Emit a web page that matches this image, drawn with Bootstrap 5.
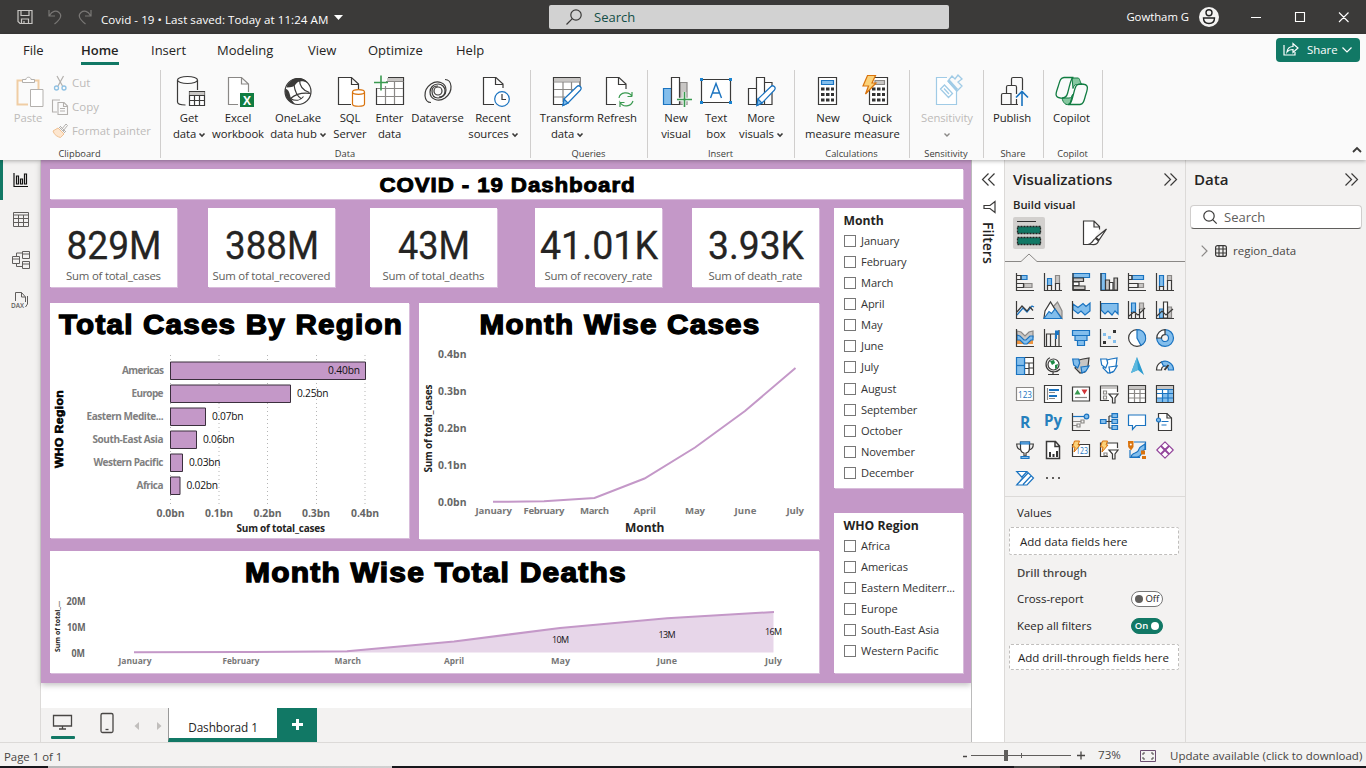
<!DOCTYPE html>
<html lang="en">
<head>
<meta charset="utf-8">
<meta name="viewport" content="width=device-width, initial-scale=1">
<title>Covid - 19</title>
<link href="https://cdn.jsdelivr.net/npm/bootstrap@5.3.0/dist/css/bootstrap.min.css" rel="stylesheet">
<style>
:root{--teal:#117865;--lilac:#c498c8;--pane:#f3f2f1;--ink:#252423}
html,body{height:100%}
body{font-family:"Open Sans","Noto Sans",sans-serif;font-size:11.3px;line-height:16px;color:var(--ink);background:#fff;overflow:hidden}
svg{display:block;flex:none;overflow:visible}
.app{width:1366px;height:768px}
/* title bar */
.titlebar{height:34px;background:#3b3a39;color:#fff}
.titlebar .doc{margin-left:9px;font-size:11.6px;letter-spacing:.04px;padding-top:6px;white-space:nowrap}
.topsearch{left:549px;top:5px;width:400px;height:24px;background:#d2d2d2;border-radius:2px;color:#134f47;font-size:13px}
/* ribbon */
.ribbon{height:126px;background:#fafafa;box-shadow:0 1px 4px rgba(0,0,0,.3);z-index:3}
.tabs{height:35px;font-size:13px;padding-left:23px}
.tabs span{line-height:20px;padding-top:6px;height:31px;white-space:nowrap}
.tabs .on{font-weight:600;border-bottom:3px solid var(--teal)}
.sharebtn{width:84px;height:24px;background:var(--teal);color:#fff;border-radius:4px;margin:4px 6px 0 auto;font-size:11.4px}
.rgroup{height:91px;position:relative}
.rgroup::after{content:"";position:absolute;right:0;top:1px;width:1px;height:88px;background:#d0cecd}
.rgroup .items{height:75px;padding-top:5px}
.rgroup .cap{font-size:9.3px;line-height:14px;text-align:center;margin-top:3px;color:#3b3a39;padding-right:2px}
.rb{text-align:center;white-space:nowrap}
.rb>div{margin:0 -20px;letter-spacing:-.08px}
.rb>svg{margin:0 auto 2px}
.dim{color:#bdbbb9}
.chev{display:inline-block;vertical-align:1px;margin-left:3px}
/* body */
.rail{width:41px;background:var(--pane);border-right:1px solid #dcdad8}
.rail .cell{height:40px}
.rail .cell.on{border-left:3px solid var(--teal)}
.report{width:930px;background:#fff}
.page{height:523px;background:var(--lilac);padding:9px 8px 9px 9px;box-shadow:0 2px 6px rgba(0,0,0,.25)}
.tile{background:#fff;box-shadow:1px 1px 0 rgba(255,255,255,.35)}
.kpis{display:grid;grid-template-columns:158px 162px 165px 157px 127px;height:79px}
.kpis .tile{width:127px}
.slicer{padding:3px 0 0 9.5px;overflow:hidden}
.slicer b{display:block;line-height:19px;font-size:12.2px;font-weight:700}
.slicer .opt{height:21.15px;font-size:11.1px;letter-spacing:-.1px;white-space:nowrap;color:#333}
.slicer i{width:12px;height:12px;border:1px solid #777;margin-right:5.5px;flex:none}
.pagetabs{height:34px;background:var(--pane);margin-top:25px}
.ptab{width:109px;background:#fff;border-left:1px solid #999;border-bottom:4px solid var(--teal);font-size:11.8px;letter-spacing:-.1px;padding-top:9px;font-weight:500;text-align:center;line-height:20px}
.filters{width:34px;background:#fff;border-left:1px solid #bbb;border-right:1px solid #dcdad8}
.filters .v{writing-mode:vertical-rl;font-size:14px;font-weight:600;line-height:18px}
.pane{background:var(--pane)}
.pane h2{font-size:15.1px;font-weight:600;line-height:20px;margin:0;letter-spacing:-.05px}
.viz{width:181px;border-right:1px solid #dcdad8}
.vgrid{display:grid;grid-template-columns:repeat(6,28px);grid-auto-rows:28px;padding:5px 0 0 6px;height:234px;border-bottom:1px solid #dcdad8}
.vgrid svg{margin:5px}
.well{width:170px;height:28px;margin-left:4px;background:#fff;border:1px dashed #c0bebc;border-radius:2px;font-size:11.5px;line-height:27px;white-space:nowrap}
.lab{font-size:11.4px;letter-spacing:-.02px}
.tog{width:32px;height:16px;border-radius:8px;font-size:9.5px;line-height:14px;border:1px solid #777;background:#fff}
.tog.on{background:var(--teal);border-color:var(--teal);color:#fff;font-weight:600}
.tog em{width:8px;height:8px;border-radius:50%;background:#605e5c}
.tog.on em{background:#fff}
.dsearch{height:24px;margin:16px 4px 0 4px;background:#fff;border:1px solid #d0cecd;border-bottom:1px solid #605e5c;border-radius:4px;font-size:13px;color:#605e5c}
.status{height:24px;background:var(--pane);border-top:1px solid #dcdad8;color:#484644;font-size:11.8px}
.strip{height:2px;background:linear-gradient(90deg,#17171c 48px,#b8b8b8 48px,#d0d0d0 392px,#17171c 392px,#17171c 1014px,#444 1014px,#444 1060px,#17171c 1060px)}
/* icon strokes and fills */
.n,.b,.g,.o,.gr,.w{fill:none;stroke-width:1.2}
.n{stroke:#3b3a39}.b{stroke:#1a73c0}.g{stroke:#3a9a50}.o{stroke:#d9730d}.gr{stroke:#8a8886}.w{stroke:#fff}
.fb{fill:#83beec}.fg{fill:#c8c6c4}.fw{fill:#fff}
.ab{font-family:"Liberation Sans",sans-serif;font-weight:700;fill:#000;stroke:#000;stroke-width:1.3;letter-spacing:1.1px}
.kp{font-family:Roboto,sans-serif;fill:#252423;stroke:#252423;stroke-width:.3;font-size:39px}
.ks{font-size:11.4px;fill:#605e5c}
.ax{font-weight:700;font-size:10.4px;fill:#666}
.cat{font-weight:700;font-size:10px;fill:#808080}
.mo{font-weight:700;font-size:9.6px;fill:#777}
.dl{font-size:10.2px;fill:#111}
.st{font-weight:700;font-size:10px;fill:#252423}
</style>
</head>
<body>
<div class="app d-flex flex-column">

<!-- title bar -->
<header class="titlebar d-flex align-items-center position-relative">
 <svg width="16" height="16" viewBox="0 0 16 16" style="margin-left:17px"><path d="M1 1.500h14v13H3l-2-2zM4 1.500v5h8v-5M4.500 14.500v-4.500h7v4.500M7 12v2" fill="none" stroke="#c8c6c4" stroke-width="1.200"/></svg>
 <svg width="14" height="16" viewBox="0 0 14 16" style="margin-left:15px"><path d="M1 1v6h6M1.500 6.500C4 2 8 1 11 3.500s2.500 6-4.500 11.500" fill="none" stroke="#797775" stroke-width="1.200"/></svg>
 <svg width="14" height="16" viewBox="0 0 14 16" class="ms-3"><path d="M13 1v6H7M12.500 6.500C10 2 6 1 3 3.500s-2.500 6 4.500 11.500" fill="none" stroke="#797775" stroke-width="1.200"/></svg>
 <span class="doc">Covid - 19 • Last saved: Today at 11:24 AM</span>
 <svg width="8" height="5" viewBox="0 0 8 5" style="margin-left:6px"><path d="M0 0h9L4.500 5z" fill="#fff"/></svg>
 <div class="topsearch position-absolute d-flex align-items-center">
  <svg width="16" height="16" viewBox="0 0 16 16" style="margin:0 12px 0 17px"><circle cx="10" cy="6" r="5.200" class="n"/><path d="M6.300 9.700L.5 15.500" class="n" stroke-width="1.500"/></svg>Search
 </div>
 <span class="ms-auto" style="margin-right:10px">Gowtham G</span>
 <svg width="20" height="20" viewBox="0 0 20 20"><circle cx="10" cy="10" r="10" fill="#f3f2f1"/><circle cx="10" cy="5.700" r="3" fill="none" stroke="#222" stroke-width="1.400"/><path d="M4.500 11h11c0 4-2 5.500-5.500 5.500S4.500 15 4.500 11z" fill="none" stroke="#222" stroke-width="1.400"/></svg>
 <svg width="130" height="14" viewBox="0 0 130 14" style="margin-right:17px"><path d="M32 7.500h10M76.500 2.500h9v9h-9zM120 2.500l9.500 9.500M129.500 2.500L120 12" fill="none" stroke="#fff" stroke-width="1.100"/></svg>
</header>

<!-- ribbon -->
<div class="ribbon position-relative">
 <nav class="tabs d-flex">
  <span style="width:58px">File</span><span class="on" style="width:38px;margin-right:32px">Home</span><span style="width:66px">Insert</span><span style="width:91px">Modeling</span><span style="width:60px">View</span><span style="width:88px">Optimize</span><span>Help</span>
  <div class="sharebtn d-flex align-items-center">
   <svg width="16" height="15" viewBox="0 0 16 15" style="margin:-3px 8px 0 7px"><path d="M1 4v10h11v-3M4 11c.5-4 3-5.500 6-5.500V2.500l5 4.500-5 4.500V8.500C7 8.500 5.500 9 4 11z" class="w"/></svg>Share
   <svg width="10" height="6" viewBox="0 0 10 6" class="ms-1"><path d="M.5.5L5 5 9.500.5" class="w"/></svg>
  </div>
 </nav>
 <div class="d-flex">
  <!-- clipboard -->
  <div class="rgroup dim" style="width:161px">
   <div class="items d-flex">
    <div class="rb" style="width:28px;margin-left:14px">
     <svg width="28" height="34" viewBox="0 0 28 34"><path d="M14 30.500H3.500v-24H9m10 0h5.500V15" fill="none" stroke="#f0cda4" stroke-width="2"/><path d="M8.500 8.500v-3h3.500c0-3 5-3 5 0h3.500v3zM16.500 15.500h12.500v17H16.500z" fill="#fff" stroke="#b3b0ad"/></svg>
     <div>Paste</div></div>
    <div style="margin-left:9px;margin-top:-3px">
     <div class="d-flex align-items-center" style="height:24px"><svg width="18" height="16" viewBox="0 0 18 16"><path d="M6 1l5.500 10M12.500 1L7 11" fill="none" stroke="#b3b0ad" stroke-width="1.200"/><circle cx="5.500" cy="13" r="2" fill="none" stroke="#8fc1e3" stroke-width="1.300"/><circle cx="13" cy="13" r="2" fill="none" stroke="#8fc1e3" stroke-width="1.300"/></svg><span style="margin-left:3px;font-size:11.500px">Cut</span></div>
     <div class="d-flex align-items-center" style="height:24px"><svg width="18" height="16" viewBox="0 0 18 16"><path d="M6 13H1.500V1H9M7 3.500h6l3.500 3.500v8.500H7zM12.500 3.500V7.500h4M9 9.500h5M9 12h5" fill="none" stroke="#b3b0ad" stroke-width="1.100"/></svg><span style="margin-left:3px;font-size:11.500px">Copy</span></div>
     <div class="d-flex align-items-center" style="height:24px"><svg width="18" height="16" viewBox="0 0 18 16"><path d="M2 8l5-3 6 6-3.500 3.500C7 14 3 12 2 8z" fill="#fde6cf" stroke="#f0c193"/><path d="M8 4l6 6M10.500 6.500L15 1l1.500 1.500L12 8M9 3l6 6" fill="none" stroke="#b3b0ad"/></svg><span style="margin-left:3px;font-size:11.300px">Format painter</span></div>
    </div>
   </div>
   <div class="cap">Clipboard</div>
  </div>
  <!-- data -->
  <div class="rgroup" style="width:370px">
   <div class="items d-flex" style="padding-left:4px">
    <div class="rb" style="width:48px"><svg width="32" height="34" viewBox="0 0 32 34"><path d="M4.500 6v22c0 2 4 3 8 3M24.500 6v10" class="n"/><ellipse cx="14.500" cy="6" rx="10" ry="3.500" class="n fw"/><path d="M16.500 17.500h15v14h-15z" class="n fw"/><path d="M16.500 18h15v3h-15z" class="fg"/><path d="M16.500 21.500h15M16.500 26.500h15M21.500 21v10.500M26.500 21v10.500" class="n" /></svg><div>Get<br>data<svg class="chev" width="6" height="4" viewBox="0 0 6 4"><path d="M.5.5L3 3 5.500.5" class="n" style="stroke-width:1.600"/></svg></div></div>
    <div class="rb" style="width:50px"><svg width="32" height="34" viewBox="0 0 32 34"><path d="M16 30.500H6.500v-27h13L26.500 10v8M19.500 3.500V10h7" class="gr fw"/><rect x="18" y="19" width="14" height="14" fill="#107c41"/><text x="25" y="30.500" text-anchor="middle" font-size="12" font-weight="700" fill="#fff">X</text></svg><div>Excel<br>workbook</div></div>
    <div class="rb" style="width:70px"><svg width="32" height="34" viewBox="0 0 32 34"><circle cx="16" cy="17.500" r="13" class="n fw"/><path d="M10 6c5-3.500 13-2 15.500 3-5-3-10-2-12 1.500-1 2-4 3-9 3C5 11 7 8 10 6zM3.200 14.500c3 1 4 3 4.800 6.500s2 6 5 9c-6-1-11-8-9.800-15.500z" fill="#3b3a39"/><path d="M12 11c1 7 3 11 7 13.500M17.500 5.500c0 6 3 11 10 13M8.500 24.500c6-5 13-6 20-5M8.500 24.500c5 3 10 2 13-2" class="n"/></svg><div>OneLake<br>data hub<svg class="chev" width="6" height="4" viewBox="0 0 6 4"><path d="M.5.5L3 3 5.500.5" class="n" style="stroke-width:1.600"/></svg></div></div>
    <div class="rb" style="width:34px"><svg width="32" height="34" viewBox="0 0 32 34"><path d="M17 30.500H4.500v-27h13L24.500 10v5M17.500 3.500V10.500h7" class="n fw"/><path d="M18.500 18v12c0 3 12 3 12 0V18" class="o fw"/><ellipse cx="24.500" cy="18" rx="6" ry="2.300" class="o fw"/></svg><div>SQL<br>Server</div></div>
    <div class="rb" style="width:45px"><svg width="32" height="34" viewBox="0 0 32 34"><path d="M2.500 14v16.500h27v-27H14" class="n fw"/><path d="M13 4h16v3H13z" class="fg"/><path d="M12 7.500h17.500M3 14.500h26M3 22.500h26M11.500 12v18M20.500 8v22" class="gr"/><path d="M0 8.500h14M7 1.500v15" class="g" style="stroke-width:1.600"/></svg><div>Enter<br>data</div></div>
    <div class="rb" style="width:51px"><svg width="32" height="34" viewBox="0 0 32 34"><g class="n"><path d="M23 5.500c7 0 9 12 0 18.500-6 4-15 2-15-6 0-4 3-8 8-8 4 0 7 3 7 7s-3 6-6 6"/><path d="M9 28.500c-7 0-9-12 0-18.500 6-4 15-2 15 6 0 5-4 8-8 8s-6-3-6-7 3-5 6-5"/><circle cx="16" cy="17" r="4"/></g></svg><div>Dataverse</div></div>
    <div class="rb" style="width:60px"><svg width="32" height="34" viewBox="0 0 32 34"><path d="M17 30.500H6.500v-27h12.500L26 10v4M18.500 3.500V10.500H26" class="n fw"/><circle cx="25" cy="25" r="7.300" class="b fw"/><path d="M25 20v5.500h4" class="n"/></svg><div>Recent<br>sources<svg class="chev" width="6" height="4" viewBox="0 0 6 4"><path d="M.5.5L3 3 5.500.5" class="n" style="stroke-width:1.600"/></svg></div></div>
   </div>
   <div class="cap">Data</div>
  </div>
  <!-- queries -->
  <div class="rgroup" style="width:117px">
   <div class="items d-flex" style="padding-left:7px">
    <div class="rb" style="width:58px"><svg width="32" height="34" viewBox="0 0 32 34"><path d="M29 15v-11.500H2.500v27H12" class="n fw"/><path d="M3 4h26v3.500H3z" class="fg"/><path d="M2.500 8h26.500M3 15.500h19M3 23h11M12 8v20M20.500 8v9" class="gr"/><path d="M13 25l13-12.500c2-2 5.500 1 3.500 3.500L17 29l-5 2.500z" class="b fw"/><path d="M13 25l4 4-5 2.500z" class="b fb"/></svg><div>Transform<br>data<svg class="chev" width="6" height="4" viewBox="0 0 6 4"><path d="M.5.5L3 3 5.500.5" class="n" style="stroke-width:1.600"/></svg></div></div>
    <div class="rb" style="width:42px"><svg width="32" height="34" viewBox="0 0 32 34"><path d="M15 30.500H5.500v-27h12.500L25 10v5M17.500 3.500V10.500H25" class="n fw"/><path d="M18 24c1-6 10-7 13-1.500V18M31 22.500h-4.500M32 27c-2 6-10 6.500-13 1.500V33M19 28.500h4.500" class="g"/></svg><div>Refresh</div></div>
   </div>
   <div class="cap">Queries</div>
  </div>
  <!-- insert -->
  <div class="rgroup" style="width:147px">
   <div class="items d-flex" style="padding-left:8px">
    <div class="rb" style="width:40px"><svg width="32" height="34" viewBox="0 0 32 34"><path d="M3.500 14.500h8v16h-8z" class="b fb"/><path d="M20 8.500h7v22H20z" class="gr fg"/><path d="M11.500 3.500h8v27h-8z" class="n fw"/><path d="M16 25.500h16M24.500 18v15" stroke="#fafafa" stroke-width="3.500"/><path d="M17 25.500h15M24.500 18v15" class="g" style="stroke-width:1.600"/></svg><div>New<br>visual</div></div>
    <div class="rb" style="width:40px"><svg width="32" height="34" viewBox="0 0 32 34"><path d="M1.500 5.500h29v23h-29z" class="n fw"/><path d="M0 4h3v3H0zM29 4h3v3h-3zM0 27h3v3H0zM29 27h3v3h-3z" fill="#1a83d0"/><path d="M10.500 24L16 9.500 21.500 24M12.500 19h7" class="b" style="stroke-width:1.400"/></svg><div>Text<br>box</div></div>
    <div class="rb" style="width:50px"><svg width="32" height="34" viewBox="0 0 32 34"><path d="M3.500 14.500h8v16h-8zM11.500 3.500h8v27h-8zM19.500 8.500h7.500v22h-7.500z" class="n fw"/><path d="M13 25l13-12.500c2-2 5.500 1 3.500 3.500L17 29l-5 2.500z" class="b fw"/><path d="M13 25l4 4-5 2.500z" class="b fb"/></svg><div>More<br>visuals<svg class="chev" width="6" height="4" viewBox="0 0 6 4"><path d="M.5.5L3 3 5.500.5" class="n" style="stroke-width:1.600"/></svg></div></div>
   </div>
   <div class="cap">Insert</div>
  </div>
  <!-- calculations -->
  <div class="rgroup" style="width:115px">
   <div class="items d-flex" style="padding-left:9px">
    <div class="rb" style="width:48px"><svg width="32" height="34" viewBox="0 0 32 34"><path d="M6.500 3.500h18v27h-18z" class="n fw"/><path d="M9.500 6.500h12v4h-12z" class="b fb"/><path d="M9 15h13M9 20.500h13M9 26h13" stroke="#333" stroke-width="3" stroke-dasharray="3.500 1.500" fill="none"/></svg><div>New<br>measure</div></div>
    <div class="rb" style="width:50px"><svg width="32" height="34" viewBox="0 0 32 34"><path d="M8.500 3.500h18v27h-18z" class="n fw"/><path d="M14 6.500h9.500v4H14z" class="gr fg"/><path d="M11 15h13M11 20.500h13M11 26h13" stroke="#333" stroke-width="3" stroke-dasharray="3.500 1.500" fill="none"/><path d="M6.500 1.500h8L11 9h4L4.500 20l3-8H2z" fill="#fbd27a" stroke="#d9730d" stroke-width="1.200"/></svg><div>Quick<br>measure</div></div>
   </div>
   <div class="cap">Calculations</div>
  </div>
  <div class="rgroup" style="width:74px">
   <div class="items d-flex justify-content-center">
    <div class="rb dim" style="width:60px"><svg width="32" height="34" viewBox="0 0 32 34"><path d="M16 3.500H5.500v27h20V17" fill="#fff" stroke="#a0cbe6" stroke-width="1.200"/><g fill="none" stroke="#a0cbe6" stroke-width="1.300"><path d="M9.500 15l4-4 8 8.500-4 4zM13 14.500l5 5.500M17 7l9 10 5-5-4-4 4-3-4-4-3 4-3-3z"/><path d="M17.500 6.500l8.500 9.500" stroke-width="3"/></g></svg><div>Sensitivity<br><svg class="chev m-0" width="6" height="4" viewBox="0 0 6 4"><path d="M.5.5L3 3 5.500.5" class="gr" style="stroke-width:1.400"/></svg></div></div>
   </div>
   <div class="cap">Sensitivity</div>
  </div>
  <div class="rgroup" style="width:60px">
   <div class="items d-flex justify-content-center pe-1">
    <div class="rb" style="width:52px"><svg width="32" height="34" viewBox="0 0 32 34"><path d="M22 30.500H5.500V21q0-1.500 1.500-1.500h8V31M10.500 19v-6q0-1.500 1.500-1.500h7q1.500 0 1.500 1.500v7M15.500 11V5q0-1.500 1.500-1.500h8q1.500 0 1.500 1.500v11M20.500 25v5" class="n"/><path d="M26 32V18M20 23.500l6-6 6 6" class="b" style="stroke-width:1.600"/></svg><div>Publish</div></div>
   </div>
   <div class="cap">Share</div>
  </div>
  <div class="rgroup" style="width:59px">
   <div class="items d-flex justify-content-center pe-1">
    <div class="rb" style="width:52px"><svg width="34" height="34" viewBox="0 0 34 34"><path d="M17 4h6c2 0 2 5 4 6.500h-5.500c-2 0-3 2-3.500 4zM7 24h7c2 0 3-1 3.500-3.500L15 30c-4 2-7-1-8-6z" fill="#86c7a0" stroke="#107c41"/><path d="M9 3.500h9.500c-3 0-4 10-6 16-1 4-3 5-7 4.500C-1 23 1 19 3 13S5 4 9 3.500zM25 30.500H13c4 0 5-10 7-16 1-3 2-4.500 6-4.500 8 0 7 4 5 10s-2 10-6 10.500z" fill="none" stroke="#107c41" stroke-width="1.300"/></svg><div>Copilot</div></div>
   </div>
   <div class="cap">Copilot</div>
  </div>
  <svg width="10" height="6" viewBox="0 0 10 6" class="ms-auto align-self-end" style="margin:0 4px 7px 0"><path d="M1 5l4-4 4 4" class="n" style="stroke-width:1.800"/></svg>
 </div>
</div>

<!-- workspace -->
<main class="d-flex" style="height:582px">
 <aside class="rail">
  <div class="cell on"><svg width="15" height="15" viewBox="0 0 15 15" style="margin:13px 0 0 10px;display:inline-block"><path d="M1 0v13.500h14M3.500 11V3h2v8zM7.500 11V6h2v5zM11.500 11V1h2v10z" fill="none" stroke="#111" stroke-width="1.200"/></svg></div>
  <div class="cell"><svg width="16" height="16" viewBox="0 0 16 16" style="margin:12px 0 0 13px;display:inline-block"><path d="M.5.5h15v14H.5zM.5 3h15M.5 6.500h15M.5 10.500h15M5.500 3v11.500M10.500 3v11.500" fill="none" stroke="#605e5c"/></svg></div>
  <div class="cell"><svg width="18" height="18" viewBox="0 0 18 18" style="margin:11px 0 0 12px;display:inline-block"><path d="M.5 5.500h7v7h-7zM.5 8h7M10.500.5h7v7h-7zM10.500 3h7M10.500 10.500h7v7h-7zM10.500 13h7M4.500 5.500V2h6M4.500 12.500v3h6" fill="none" stroke="#605e5c"/></svg></div>
  <div class="cell"><svg width="18" height="18" viewBox="0 0 18 18" style="margin:11px 0 0 11px;display:inline-block"><path d="M4.500 10V1.500h6L14.500 6v5M10.500 1.500V6h4M16.500 5v8l-2 3" fill="none" stroke="#605e5c"/><text x="0" y="16.500" font-size="7.500" font-weight="600" fill="#605e5c" textLength="13" lengthAdjust="spacingAndGlyphs">DAX</text></svg></div>
 </aside>

 <section class="report d-flex flex-column">
  <div class="page d-flex flex-column">
   <div class="tile" style="height:30px;margin-bottom:9px"><svg width="913" height="30" viewBox="50 169 913 30"><text x="379.500" y="191.500" class="ab" font-size="20" style="stroke-width:.9;letter-spacing:.8px" textLength="256" lengthAdjust="spacingAndGlyphs">COVID - 19 Dashboard</text></svg></div>
   <div class="d-flex justify-content-between flex-fill">
    <div style="width:769px">
     <div class="kpis">
      <div class="tile"><svg width="127" height="79" viewBox="50 208 127 79"><text class="kp" x="66.500" y="259" textLength="95" lengthAdjust="spacingAndGlyphs">829M</text><text class="ks" x="66" y="280" textLength="95">Sum of total_cases</text></svg></div>
      <div class="tile"><svg width="127" height="79" viewBox="208 208 127 79"><text class="kp" x="225" y="259" textLength="94" lengthAdjust="spacingAndGlyphs">388M</text><text class="ks" x="212.500" y="280" textLength="118">Sum of total_recovered</text></svg></div>
      <div class="tile"><svg width="127" height="79" viewBox="370 208 127 79"><text class="kp" x="398" y="259" textLength="72" lengthAdjust="spacingAndGlyphs">43M</text><text class="ks" x="382.500" y="280" textLength="102">Sum of total_deaths</text></svg></div>
      <div class="tile"><svg width="127" height="79" viewBox="535 208 127 79"><text class="kp" x="540" y="259" textLength="118" lengthAdjust="spacingAndGlyphs">41.01K</text><text class="ks" x="544.500" y="280" textLength="108">Sum of recovery_rate</text></svg></div>
      <div class="tile"><svg width="127" height="79" viewBox="692 208 127 79"><text class="kp" x="708" y="259" textLength="96" lengthAdjust="spacingAndGlyphs">3.93K</text><text class="ks" x="708.500" y="280" textLength="94">Sum of death_rate</text></svg></div>
     </div>
     <div class="d-flex justify-content-between" style="margin-top:16px;height:236px">
      <div class="tile" style="width:359px;height:235px">
       <svg width="359" height="235" viewBox="50 303 359 235">
        <text class="ab" x="59" y="333.500" font-size="27" textLength="344" lengthAdjust="spacingAndGlyphs">Total Cases By Region</text>
        <path d="M170.500 355v150M219 355v150M267.500 355v150M316.500 355v150M365 355v150" stroke="#b5b5b5" stroke-dasharray="1 3" fill="none"/>
        <g fill="#c498c8" stroke="#3b2f3d"><path d="M170.500 362h195v17.500h-195zM170.500 385h120v17.500h-120zM170.500 408h35v17.500h-35zM170.500 431h26v17.500h-26zM170.500 454h12v17.500h-12zM170.500 477h9.500v17.500h-9.500z"/></g>
        <g class="cat"><text x="122" y="374" textLength="42">Americas</text><text x="131.500" y="397" textLength="32">Europe</text><text x="86.500" y="420" textLength="77">Eastern Medite...</text><text x="92.500" y="443" textLength="71">South-East Asia</text><text x="93.500" y="466" textLength="70">Western Pacific</text><text x="136.500" y="489" textLength="27">Africa</text></g>
        <g class="dl"><text x="328" y="374" textLength="32">0.40bn</text><text x="297" y="397" textLength="31.500">0.25bn</text><text x="212" y="420" textLength="31.500">0.07bn</text><text x="203" y="443" textLength="31.500">0.06bn</text><text x="189" y="466" textLength="31.500">0.03bn</text><text x="186.500" y="489" textLength="31.500">0.02bn</text></g>
        <g class="ax"><text x="156.500" y="517" textLength="28">0.0bn</text><text x="205" y="517" textLength="28">0.1bn</text><text x="253.500" y="517" textLength="28">0.2bn</text><text x="302" y="517" textLength="28">0.3bn</text><text x="351" y="517" textLength="28">0.4bn</text></g>
        <text class="st" x="236.500" y="532" textLength="88.500">Sum of total_cases</text>
        <text class="ab" transform="translate(62.500 468) rotate(-90)" font-size="11" style="stroke-width:.6;letter-spacing:.3px" textLength="78" lengthAdjust="spacingAndGlyphs">WHO Region</text>
       </svg>
      </div>
      <div class="tile" style="width:400px">
       <svg width="400" height="236" viewBox="419 303 400 236">
        <text class="ab" x="479.500" y="333.500" font-size="27" textLength="281" lengthAdjust="spacingAndGlyphs">Month Wise Cases</text>
        <g class="ax"><text x="438" y="358" textLength="28.500">0.4bn</text><text x="438" y="395" textLength="28.500">0.3bn</text><text x="438" y="432" textLength="28.500">0.2bn</text><text x="438" y="469" textLength="28.500">0.1bn</text><text x="438" y="506" textLength="28.500">0.0bn</text></g>
        <path d="M493 501.800L544 501.300 594.500 498 644.500 478.500 695 447.500 745 411 795.500 368" fill="none" stroke="#c498c8" stroke-width="2"/>
        <g class="mo"><text x="475.500" y="514" textLength="36.500">January</text><text x="523.500" y="514" textLength="41">February</text><text x="580" y="514" textLength="29">March</text><text x="633.500" y="514" textLength="22.500">April</text><text x="685" y="514" textLength="20">May</text><text x="734.500" y="514" textLength="22">June</text><text x="786.500" y="514" textLength="17.500">July</text></g>
        <text x="625" y="532" font-size="12" font-weight="700" fill="#252423" textLength="39.500">Month</text>
        <text class="st" transform="translate(432 472.500) rotate(-90)" textLength="88">Sum of total_cases</text>
       </svg>
      </div>
     </div>
     <div class="tile" style="margin-top:12px;height:122px">
      <svg width="769" height="122" viewBox="50 551 769 122">
       <text class="ab" x="245" y="581.500" font-size="27" textLength="382" lengthAdjust="spacingAndGlyphs">Month Wise Total Deaths</text>
       <g class="ax" style="font-size:10px"><text x="66.500" y="604.500" textLength="19" lengthAdjust="spacingAndGlyphs">20M</text><text x="67" y="630.500" textLength="18.500" lengthAdjust="spacingAndGlyphs">10M</text><text x="71.500" y="656.500" textLength="13.500" lengthAdjust="spacingAndGlyphs">0M</text></g>
       <path d="M134 652.300L347 651.300 454 641.500 560 628 667 618.200 773.500 612V652.500H134z" fill="#e7d6e9"/>
       <path d="M134 652.300L241 652 347 651.300 454 641.500 560 628 667 618.200 774 612" fill="none" stroke="#c498c8" stroke-width="2"/>
       <g class="dl" style="font-size:9px"><text x="552" y="643" textLength="17">10M</text><text x="658.500" y="638" textLength="17">13M</text><text x="765" y="635" textLength="17">16M</text></g>
       <g class="mo"><text x="118.500" y="664" textLength="33" lengthAdjust="spacingAndGlyphs">January</text><text x="222.500" y="664" textLength="37" lengthAdjust="spacingAndGlyphs">February</text><text x="334.500" y="664" textLength="26.500" lengthAdjust="spacingAndGlyphs">March</text><text x="444" y="664" textLength="20" lengthAdjust="spacingAndGlyphs">April</text><text x="551" y="664" textLength="19" lengthAdjust="spacingAndGlyphs">May</text><text x="657" y="664" textLength="20" lengthAdjust="spacingAndGlyphs">June</text><text x="765" y="664" textLength="17" lengthAdjust="spacingAndGlyphs">July</text></g>
       <text class="st" transform="translate(60 652) rotate(-90)" style="font-size:7.500px" textLength="51" lengthAdjust="spacingAndGlyphs">Sum of total_...</text>
      </svg>
     </div>
    </div>
    <div style="width:129px">
     <div class="tile slicer" style="height:280px;margin-bottom:25px"><b>Month</b>
      <div class="opt d-flex align-items-center"><i></i>January</div><div class="opt d-flex align-items-center"><i></i>February</div><div class="opt d-flex align-items-center"><i></i>March</div><div class="opt d-flex align-items-center"><i></i>April</div><div class="opt d-flex align-items-center"><i></i>May</div><div class="opt d-flex align-items-center"><i></i>June</div><div class="opt d-flex align-items-center"><i></i>July</div><div class="opt d-flex align-items-center"><i></i>August</div><div class="opt d-flex align-items-center"><i></i>September</div><div class="opt d-flex align-items-center"><i></i>October</div><div class="opt d-flex align-items-center"><i></i>November</div><div class="opt d-flex align-items-center"><i></i>December</div>
     </div>
     <div class="tile slicer" style="height:160px"><b>WHO Region</b>
      <div class="opt d-flex align-items-center"><i></i>Africa</div><div class="opt d-flex align-items-center"><i></i>Americas</div><div class="opt d-flex align-items-center"><i></i>Eastern Mediterr...</div><div class="opt d-flex align-items-center"><i></i>Europe</div><div class="opt d-flex align-items-center"><i></i>South-East Asia</div><div class="opt d-flex align-items-center"><i></i>Western Pacific</div>
     </div>
    </div>
   </div>
  </div>
  <div class="pagetabs d-flex">
   <svg width="127" height="34" viewBox="41 708 127 34"><path d="M53.500 715.500h18v10.500h-18zM62.500 726v3M59 729h7" fill="none" stroke="#484644" stroke-width="1.300"/><rect x="51" y="736" width="24" height="3" rx="1" fill="#117865"/><rect x="101" y="713.500" width="12" height="19" rx="1.500" fill="none" stroke="#484644" stroke-width="1.300"/><path d="M105.500 729.500h3" stroke="#484644" stroke-width="1.300"/><path d="M139 722v8l-4.500-4zM157 722v8l4.500-4z" fill="#c0bebc"/></svg>
   <div class="ptab">Dashborad 1</div>
   <div style="width:40px;background:var(--teal)"><svg width="40" height="34" viewBox="0 0 40 34"><path d="M15 16.500h11M20.500 11v11" stroke="#fff" stroke-width="3"/></svg></div>
  </div>
 </section>

 <aside class="filters d-flex flex-column align-items-center">
  <svg width="13" height="13" viewBox="0 0 13 13" style="margin-top:13px"><path d="M6.500.5L.5 6.500l6 6M12.500.5l-6 6 6 6" class="n"/></svg>
  <svg width="13" height="12" viewBox="0 0 13 12" style="margin:15px 0 9px 3px"><path d="M12 .5v11L7 7.500H1v-3h6z" class="n"/></svg>
  <div class="v">Filters</div>
 </aside>

 <aside class="pane viz">
  <div class="d-flex align-items-center" style="padding:9px 8px 0 8px"><h2>Visualizations</h2><svg class="ms-auto" width="13" height="13" viewBox="0 0 13 13"><path d="M.5.5l6 6-6 6M6.500.5l6 6-6 6" class="n"/></svg></div>
  <div style="padding:8px 0 1px 8px;font-weight:600;line-height:16px;font-size:11.300px">Build visual</div>
  <svg width="180" height="49" viewBox="1005 214 180 49"><rect x="1013" y="217" width="32" height="32" rx="2" fill="#d2d0ce"/><path d="M1017 221.500h19" stroke="#333"/><path d="M1017.500 226.500h23v7h-23zM1017.500 237.500h23v7h-23z" fill="#117865" stroke="#222" stroke-width="1.300" stroke-dasharray="2 1"/><path d="M1091 244.500h-7.500v-23.500h10.500l5.500 5.500v3M1094 221v6h5.500" class="n fw"/><path d="M1106.500 229l-7.500 11-3-2.500zM1095.500 238.500c-3 1-2 4-6 5.500 5 1.500 8 0 9-3z" class="n fw"/><path d="M1005 261.500h16l8-7.500 8 7.500h148" fill="none" stroke="#8a8886"/></svg>
  <div class="vgrid">
   <svg width="18" height="18" viewBox="0 0 18 18"><path d="M5 2.500h6v4H5z" class="b fb"/><path d="M8 10.500h8v4H8z" class="gr fg"/><path d="M.5 0v17.500H18M.5 2.500H5v4H.5M.5 10.500h7v4H.5" class="n"/></svg>
   <svg width="18" height="18" viewBox="0 0 18 18"><path d="M3.500 5.500h4v7h-4z" class="b fb"/><path d="M11.500 2.500h4v8h-4z" class="gr fg"/><path d="M.5 0v17.500H18M3.500 17v-4.500h4V17M11.500 17v-6.500h4V17" class="n"/></svg>
   <svg width="18" height="18" viewBox="0 0 18 18"><path d="M1 .5h16.500v4H1z" class="b fb"/><path d="M1 5h10.500v3.500H1zM1 13h12v3.500H1z" class="n fg"/><path d="M1 9h6v3.500H1z" class="n fw"/><path d="M1 0v17.500H18" class="n"/></svg>
   <svg width="18" height="18" viewBox="0 0 18 18"><path d="M1 .5h4.500V17H1z" class="b fb"/><path d="M5.500 7h4v10h-4zM14 5h3.500v12H14z" class="n fg"/><path d="M9.500 9.500H13V17H9.500z" class="n fw"/><path d="M1 0v17.500H18" class="n"/></svg>
   <svg width="18" height="18" viewBox="0 0 18 18"><path d="M4 2.500h11.500v4H4z" class="b fb"/><path d="M10 10.500h5.500v4H10z" class="gr fg"/><path d="M.5 0v17.500H18M.5 2.500H4v4H.5M.5 10.500H10v4H.5" class="n"/></svg>
   <svg width="18" height="18" viewBox="0 0 18 18"><path d="M3.500 2.500h4v11h-4z" class="b fb"/><path d="M11.500 2.500h4v5h-4z" class="gr fg"/><path d="M.5 0v17.500H18M3.500 17v-3.500h4V17M11.500 17V7.500h4V17" class="n"/></svg>

   <svg width="18" height="18" viewBox="0 0 18 18"><path d="M1 14L7 7l4 4 5-6 2 1" class="b"/><path d="M.5 0v17.500H18M1 11l5-6 5 5 3-4 3 3.500" class="n"/></svg>
   <svg width="18" height="18" viewBox="0 0 18 18"><path d="M9 6l4.500-5L18 10v7z" class="gr fg"/><path d="M0 17l1-7 5.500-9 5.500 9-4 5z" class="n fw"/><path d="M0 17.500l5-7 2.500 2L11 8l6.500 9.500z" class="b fb"/></svg>
   <svg width="18" height="18" viewBox="0 0 18 18"><path d="M1 3l5 3.500 5-4 3 3L18 2v8l-5 4-4-4-3 2.500-5-4z" class="b fb"/><path d="M.5 0v17.500H18" class="n"/></svg>
   <svg width="18" height="18" viewBox="0 0 18 18"><path d="M1 2.500h17V13l-3-3-3 4-4-4-3 3-4-4z" class="b fb"/><path d="M.5 0v17.500H18" class="n"/></svg>
   <svg width="18" height="18" viewBox="0 0 18 18"><path d="M3.500 2h4v9h-4z" class="b fb"/><path d="M11.500 2h4v6h-4z" class="gr fg"/><path d="M.5 0v17.500H18M3.500 17v-6M7.500 17v-6M11.500 17V8M15.500 17V8M1 15l5-4 4 3 7-7" class="n"/></svg>
   <svg width="18" height="18" viewBox="0 0 18 18"><path d="M3.500 8h4v9h-4z" class="b fb"/><path d="M11.500 6h4v11h-4z" class="gr fg"/><path d="M7.500 1h4v16h-4z" class="n fw"/><path d="M.5 0v17.500H18M1 15l5-5 4 4 7-6" class="n"/></svg>

   <svg width="18" height="18" viewBox="0 0 18 18"><path d="M1 9h16v6H1z" fill="#f0953f"/><path d="M1 2l4 1 4 4 4-4 4-1v6l-3 1-3 3H7L4 9 1 8z" class="fg gr"/><path d="M1 6l3 1 4 4h2l4-4h3v4h-2l-4 4H8l-4-4H1z" class="b fb"/><path d="M.5 0v17.500H18" class="n"/></svg>
   <svg width="18" height="18" viewBox="0 0 18 18"><path d="M.5 0v17.500H18M2.500 17V5h4v12M6.500 5h5v12M15 17V1" class="n"/><path d="M11 10V1.500h4V6h-2v4z" fill="#1a73c0"/></svg>
   <svg width="18" height="18" viewBox="0 0 18 18"><path d="M.5 1.500h17v5H.5zM3 6.500h12v5H3zM5.500 11.500h7v5h-7z" class="b fb"/></svg>
   <svg width="18" height="18" viewBox="0 0 18 18"><path d="M.5 0v17.500H18" class="n"/><path d="M3 4h3v3H3zM8 7h3v3H8zM13 11h3v3h-3z" class="fb"/><path d="M13 1h3v3h-3zM3 12h3v3H3z" fill="#333"/></svg>
   <svg width="18" height="18" viewBox="0 0 18 18"><circle cx="9" cy="9" r="8.400" class="n fw"/><path d="M9 .6A8.400 8.400 0 0 1 13 16.500L9 9z" class="b fb"/></svg>
   <svg width="18" height="18" viewBox="0 0 18 18"><circle cx="9" cy="9" r="6" fill="none" stroke="#83beec" stroke-width="5"/><path d="M.7 9A8.400 8.400 0 1 0 9 .6M5.500 9A3.500 3.500 0 1 0 9 5.500" class="b"/><path d="M.8 9A8.300 8.300 0 0 1 9 .7v5A3.500 3.500 0 0 0 5.500 9z" class="n fw"/></svg>

   <svg width="18" height="18" viewBox="0 0 18 18"><path d="M8.500.500h9v17h-9zM8.500 6h9M8.500 11.500H13M13 6v11.500M13 11h4.500" class="n fw"/><path d="M.5.500h8v17h-8z" class="b fb"/><path d="M.5 8.500h8" class="b"/></svg>
   <svg width="18" height="18" viewBox="0 0 18 18"><circle cx="9.500" cy="7.500" r="5.500" class="n fw"/><path d="M6 4l4-1 1 3-3 2zM11 8l3-1-1 4-2 1z" fill="#1d8a45"/><path d="M6 .8C1 3 1 10 4.500 13s9 2 11.500-1M9 15v2M4 17.500h11" class="n"/></svg>
   <svg width="18" height="18" viewBox="0 0 18 18"><path d="M7 3l4-1 6-1-1 8-3 6-5 1-5-5z" class="n fg"/><path d="M.7 2l6 0 1 4-2 5-4-3zM9 10l8-1-3 5-4 2z" class="b fb"/></svg>
   <svg width="18" height="18" viewBox="0 0 18 18"><path d="M7 3l4-1 6-1-1 8-3 6-5 1-5-5z" class="b fw"/><path d="M.7 2l6 0 1 4-2 5-4-3zM9 10l8-1-3 5-4 2z" class="b fw"/></svg>
   <svg width="18" height="18" viewBox="0 0 18 18"><path d="M9 0l7 18-6-5-7 3z" fill="#2b9bcf"/><path d="M9 0l1 13-7 3z" fill="#5cb8de"/></svg>
   <svg width="18" height="18" viewBox="0 0 18 18"><path d="M.5 13a8.500 8.500 0 0 1 5-8l3 4a4 4 0 0 0-3 4z" class="n fw"/><path d="M5.500 5a8.500 8.500 0 0 1 12 8h-5a4 4 0 0 0-5-4z" class="b fb"/><path d="M8.500 13l4-5" class="n" style="stroke-width:2"/></svg>

   <svg width="18" height="18" viewBox="0 0 18 18"><path d="M.5 2.500h17v13H.5z" class="gr fw"/><text x="2" y="12.500" font-size="9" fill="#1a73c0" textLength="14" lengthAdjust="spacingAndGlyphs">123</text></svg>
   <svg width="18" height="18" viewBox="0 0 18 18"><path d="M.5.500h17v17H.5z" class="n fw"/><path d="M3.500 3v12M5 7.500h6M5 13.500h6" class="gr"/><path d="M5 5h10M5 11h8" class="b" style="stroke-width:2"/></svg>
   <svg width="18" height="18" viewBox="0 0 18 18"><path d="M.5 2h17v14H.5z" class="n fw"/><path d="M2.500 9.500l3-5 3 5z" fill="#3a9a50"/><path d="M9.500 4.500h6l-3 5z" fill="#d13438"/><path d="M3 12.500h12" class="gr"/></svg>
   <svg width="18" height="18" viewBox="0 0 18 18"><path d="M9 15.500H.5V1h17v6" class="n fw"/><path d="M1 1.500h16V4H1z" class="fg"/><path d="M3.500 6h3v3h-3zM3.500 11h3v3h-3z" class="gr"/><path d="M9 9h9l-3 4v5h-2.500v-5z" class="n fw"/></svg>
   <svg width="18" height="18" viewBox="0 0 18 18"><path d="M.5.500h17v17H.5z" class="n fw"/><path d="M1 1h16v3H1z" class="fg"/><path d="M1 4.500h16M1 8.500h16M1 13h16M6.500 4v13M12 4v13" class="gr"/></svg>
   <svg width="18" height="18" viewBox="0 0 18 18"><path d="M.5.500h17v17H.5z" class="n fw"/><path d="M1 1h16v3H1z" class="fg"/><path d="M12 4.500h5V17H1v-4h11zM6.500 9H12v4H6.500z" class="fb"/><path d="M1 4.500h16M1 8.500h16M1 13h16M6.500 4v13M12 4v13" class="b"/></svg>

   <svg width="18" height="18" viewBox="0 0 18 18"><text x="9" y="15" text-anchor="middle" font-size="15.500" font-weight="700" fill="#2580bd">R</text></svg>
   <svg width="18" height="18" viewBox="0 0 18 18"><text x="0" y="13" font-size="15.500" font-weight="700" fill="#2580bd" textLength="18" lengthAdjust="spacingAndGlyphs">Py</text></svg>
   <svg width="18" height="18" viewBox="0 0 18 18"><path d="M.5 0v17.500H18" class="n"/><path d="M1 3.500h11" class="b"/><path d="M1 8.500h8M1 12.500h4M9 7h3v3H9zM5 11h3v3H5z" class="gr"/><circle cx="14.500" cy="3.500" r="2.300" class="b fb"/></svg>
   <svg width="18" height="18" viewBox="0 0 18 18"><path d="M6 8.500h6M9 3v12M9 3h3M9 15h3" class="n"/><path d="M.5 6.500h5.500v4H.5zM12 .700h5.500v4H12zM12 6.500h5.500v4H12zM12 12.500h5.500v4H12z" class="b fb"/></svg>
   <svg width="18" height="18" viewBox="0 0 18 18"><path d="M.5 2h17v10.500H8L4.500 16.500v-4h-4z" class="b fw"/></svg>
   <svg width="18" height="18" viewBox="0 0 18 18"><path d="M2.500.500h8.500L15.500 5v12.500h-13z" class="n fw"/><path d="M11 .500V5h4.500" class="n"/><circle cx="2.500" cy="7" r="2" class="b fb"/><path d="M5.500 8.500h7M5.500 12h5" class="b"/></svg>

   <svg width="18" height="18" viewBox="0 0 18 18"><path d="M4.500 3H.7c0 4 1.500 5.500 4.500 6M13.500 3h3.800c0 4-1.500 5.500-4.500 6" class="n"/><path d="M4.500 1h9v6c0 5-3 4.500-3.500 5v3h-2v-3C7.500 11.500 4.500 12 4.500 7z" class="n fw"/><path d="M4.500 3V1h9v2zM5 15.500h8v2H5z" class="b fb"/></svg>
   <svg width="18" height="18" viewBox="0 0 18 18"><path d="M2.500.500h9L15.500 5v12.500h-13zM11 .500V5.500h4.500" class="n fw" style="stroke-width:1.500"/><path d="M5 11h2v5H5zM8.500 13h2v3h-2zM12 10h2v6h-2z" fill="#333"/></svg>
   <svg width="18" height="18" viewBox="0 0 18 18"><path d="M.5 3.500h17v12H.5z" class="n fw"/><text x="4" y="13" font-size="8.500" fill="#1a73c0" textLength="12" lengthAdjust="spacingAndGlyphs">123</text><path d="M2.500 0h5L6 4h2l-6 7 1-5H.5z" fill="#fbd27a" stroke="#d9730d"/></svg>
   <svg width="18" height="18" viewBox="0 0 18 18"><path d="M8 15.500H.5V2h17v5" class="n fw"/><path d="M4 12h3v2.500H4z" class="gr"/><path d="M9 9h9l-3 4v5h-2.500v-5z" class="n fw"/><path d="M2.500 0h5L6 4h2l-6 7 1-5H.5z" fill="#fbd27a" stroke="#d9730d"/></svg>
   <svg width="18" height="18" viewBox="0 0 18 18"><path d="M6 1h11.500v8M12 16.500H2V9" class="b"/><path d="M3 16c1-6 7-2 8-8 .5-3 4-3 6-5v5c-5 2-2 8-8 8z" class="b fb"/><path d="M0 0h5.500v6L3 9.500.200 6z" fill="#d9730d"/><circle cx="2.800" cy="3.500" r="1" fill="#fff"/><path d="M13 9.500h4v4h-4zM14 15h4v3h-4z" fill="#d9730d"/></svg>
   <svg width="18" height="18" viewBox="0 0 18 18"><path d="M6 .7h6L17.300 6v6L12 17.300H6L.7 12V6z" fill="none"/><path d="M9 .8l3.800 3.800L9 8.400 5.200 4.600zM9 9.600l3.800 3.800L9 17.200l-3.800-3.800zM4.600 5.200L8.400 9l-3.800 3.800L.8 9zM13.400 5.200L17.200 9l-3.800 3.800L9.600 9z" fill="#fff" stroke="#93459b" stroke-width="1.200" stroke-linejoin="round"/></svg>

   <svg width="18" height="18" viewBox="0 0 18 18"><path d="M.7 2.500H11l6.500 6.500L11 16H.7l6-7zM1 15.500L12 4M7 15.500l8-8.500M11 2.500L6 8" class="b fw"/></svg>
   <svg width="18" height="18" viewBox="0 0 18 18"><path d="M2 8h2v2H2zM8 8h2v2H8zM14 8h2v2h-2z" fill="#605e5c"/></svg>
  </div>
  <div class="lab" style="padding:8px 0 6px 12px">Values</div>
  <div class="well" style="padding-left:10px">Add data fields here</div>
  <div class="lab" style="padding:10px 0 0 12px;font-weight:600;color:#484644;font-size:11.400px">Drill through</div>
  <div class="lab d-flex align-items-center justify-content-between" style="padding:0 22px 0 12px;height:35px">Cross-report<span class="tog d-flex align-items-center justify-content-evenly"><em></em>Off</span></div>
  <div class="lab d-flex align-items-center justify-content-between" style="padding:0 22px 0 12px;height:19px">Keep all filters<span class="tog on d-flex align-items-center justify-content-evenly">On<em></em></span></div>
  <div class="well" style="padding-left:8px;margin-top:9px;height:26px;line-height:25px">Add drill-through fields here</div>
 </aside>

 <aside class="pane flex-fill">
  <div class="d-flex align-items-center" style="padding:9px 8px 0 8px"><h2>Data</h2><svg class="ms-auto" width="13" height="13" viewBox="0 0 13 13"><path d="M.5.5l6 6-6 6M6.500.5l6 6-6 6" class="n"/></svg></div>
  <div class="dsearch d-flex align-items-center"><svg width="14" height="14" viewBox="0 0 14 14" style="margin:0 7px 0 12px"><circle cx="6" cy="6" r="5.200" class="n"/><path d="M9.700 9.700l4 4" class="n"/></svg>Search</div>
  <div class="d-flex align-items-center" style="padding:14px 0 0 15px;font-size:11.500px;color:#484644"><svg width="7" height="12" viewBox="0 0 7 12"><path d="M.7.700L6 6 .7 11.300" class="gr"/></svg><svg width="12" height="12" viewBox="0 0 12 12" style="margin:0 6px 0 7px"><rect x=".6" y=".6" width="10.800" height="10.800" rx="2" class="n"/><path d="M1 4h10M1 8h10M4 1v10M8 1v10" class="n"/></svg>region_data</div>
 </aside>
</main>

<footer class="status d-flex align-items-center">
 <span style="margin:4px 0 0 4px;font-size:11.400px">Page 1 of 1</span>
 <svg class="ms-auto" width="124" height="22" viewBox="962 744 124 22"><path d="M963 756.500h4M1077 755.500h8M1081 751.500v8" stroke="#484644" stroke-width="1.300"/><path d="M971 755.500h100M1021.500 753v5" stroke="#605e5c"/><rect x="1004" y="750" width="4" height="11" fill="#605e5c"/></svg>
 <span style="margin-left:12px;width:42px;font-size:11.600px">73%</span>
 <svg width="16" height="12" viewBox="0 0 16 12" style="margin-top:2px"><path d="M.5.500h15v11H.5z" fill="none" stroke="#6b4d70"/><path d="M3 5V3h2M11 3h2v2M13 7v2h-2M5 9H3V7" fill="none" stroke="#484644"/></svg>
 <span style="margin:3px 4px 0 14px;width:192px;white-space:nowrap;font-size:11.500px">Update available (click to download)</span>
</footer>
<div class="strip"></div>
</div>
<script src="https://cdn.jsdelivr.net/npm/bootstrap@5.3.0/dist/js/bootstrap.bundle.min.js"></script>
</body>
</html>
